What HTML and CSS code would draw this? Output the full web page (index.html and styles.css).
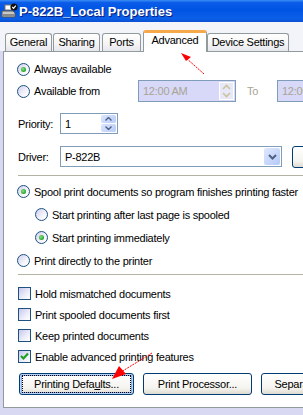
FILE: index.html
```html
<!DOCTYPE html>
<html lang="en">
<head>
    <meta charset="UTF-8">
    <title>P-822B_Local Properties</title>
    <link rel="stylesheet" href="styles.css">
</head>
<body>
    <div class="window">
        <div class="titlebar">
            <svg class="app-icon" width="17" height="17" viewBox="0 0 17 17">
                <rect x="4" y="2" width="7" height="5" fill="#fff" stroke="#777"/>
                <path d="M1 8 L12 8 L14 10 L14 14 L1 14 Z" fill="#c8c8c8" stroke="#555"/>
                <rect x="2" y="11" width="11" height="2" fill="#8a8a8a"/>
                <circle cx="13" cy="4" r="3.6" fill="#111"/>
                <path d="M11.3 4 L12.6 5.4 L14.8 2.6" stroke="#fff" stroke-width="1.2" fill="none"/>
            </svg>
            <span class="title">P-822B_Local Properties</span>
        </div>

        <div class="tabstrip">
            <div class="tab tab-general">General</div>
            <div class="tab tab-sharing">Sharing</div>
            <div class="tab tab-ports">Ports</div>
            <div class="tab tab-advanced active">Advanced</div>
            <div class="tab tab-device">Device Settings</div>
        </div>

        <div class="panel">
            <div class="row row-always">
                <span class="radio checked"></span>
                <span class="label">Always available</span>
            </div>
            <div class="row row-from">
                <div class="from-label">
                    <span class="radio"></span>
                    <span class="label">Available from</span>
                </div>
                <div class="timebox">
                    <span>12:00 AM</span>
                    <span class="time-spin">
                        <svg width="9" height="14" viewBox="0 0 9 14">
                            <path d="M1 5 L4.5 1.5 L8 5" stroke="#c8c4a0" stroke-width="1.6" fill="none"/>
                            <path d="M1 9 L4.5 12.5 L8 9" stroke="#c8c4a0" stroke-width="1.6" fill="none"/>
                        </svg>
                    </span>
                </div>
                <span class="to-label">To</span>
                <div class="timebox">
                    <span>12:00 AM</span>
                </div>
            </div>
            <div class="row row-priority">
                <span class="field-label">Priority:</span>
                <div class="spinbox">
                    <span class="spin-value">1</span>
                    <span class="spin-buttons">
                        <span class="spin-btn">
                            <svg width="7" height="4" viewBox="0 0 7 4"><path d="M0.5 3.5 L3.5 0.5 L6.5 3.5" stroke="#4d6185" stroke-width="1.4" fill="none"/></svg>
                        </span>
                        <span class="spin-btn">
                            <svg width="7" height="4" viewBox="0 0 7 4"><path d="M0.5 0.5 L3.5 3.5 L6.5 0.5" stroke="#4d6185" stroke-width="1.4" fill="none"/></svg>
                        </span>
                    </span>
                </div>
            </div>
            <div class="row row-driver">
                <span class="field-label">Driver:</span>
                <div class="combo">
                    <span class="combo-value">P-822B</span>
                    <span class="combo-btn">
                        <svg width="9" height="6" viewBox="0 0 9 6"><path d="M1 1 L4.5 4.5 L8 1" stroke="#4d6185" stroke-width="2" fill="none"/></svg>
                    </span>
                </div>
                <div class="button new-driver">New Driver...</div>
            </div>

            <div class="separator sep-one"></div>

            <div class="spool-group">
                <div class="row opt">
                    <span class="radio checked"></span>
                    <span class="label">Spool print documents so program finishes printing faster</span>
                </div>
                <div class="row opt sub">
                    <span class="radio"></span>
                    <span class="label">Start printing after last page is spooled</span>
                </div>
                <div class="row opt sub">
                    <span class="radio checked"></span>
                    <span class="label">Start printing immediately</span>
                </div>
                <div class="row opt">
                    <span class="radio"></span>
                    <span class="label">Print directly to the printer</span>
                </div>
            </div>

            <div class="separator sep-two"></div>

            <div class="check-group">
                <div class="row check-row">
                    <span class="checkbox"></span>
                    <span class="label">Hold mismatched documents</span>
                </div>
                <div class="row check-row">
                    <span class="checkbox"></span>
                    <span class="label">Print spooled documents first</span>
                </div>
                <div class="row check-row">
                    <span class="checkbox"></span>
                    <span class="label">Keep printed documents</span>
                </div>
                <div class="row check-row">
                    <span class="checkbox checked">
                        <svg width="11" height="11" viewBox="0 0 11 11"><path d="M2 5 L4.5 7.5 L9 2.5" stroke="#21a121" stroke-width="2.2" fill="none"/></svg>
                    </span>
                    <span class="label">Enable advanced printing features</span>
                </div>
            </div>

            <div class="button-row">
                <div class="button focused btn-defaults"><span class="focus-rect">Printing Defa<u>u</u>lts...</span></div>
                <div class="button btn-processor">Print Processor...</div>
                <div class="button btn-separator">Separator Page...</div>
            </div>
        </div>

        <svg class="annotations" width="303" height="415" viewBox="0 0 303 415">
            <line x1="204" y1="74" x2="186" y2="58" stroke="#f00" stroke-width="1" stroke-dasharray="2 1"/>
            <path d="M181 53 L191 57 L186 61 Z" fill="#f00"/>
            <line x1="152" y1="353" x2="121" y2="372" stroke="#f00" stroke-width="1" stroke-dasharray="2 1"/>
            <path d="M112 379 L119 366 L126 374 Z" fill="#f00"/>
        </svg>
    </div>
</body>
</html>
```

FILE: styles.css
```css
body {
    margin: 0;
    background-color: #d9d8f2;
    font-family: 'Liberation Sans', Arial, sans-serif;
    font-size: 11px;
    letter-spacing: -0.25px;
    color: #000;
    overflow: hidden;
}

.window {
    position: relative;
    width: 303px;
    height: 415px;
    overflow: hidden;
    background-color: #d9d8f2;
}

/* title bar */
.titlebar {
    height: 22px;
    display: flex;
    align-items: center;
    background: linear-gradient(#3d8cf5 0%, #0a5ce8 12%, #0054e3 45%, #0b5fe9 85%, #0a4fd0 100%);
    color: #fff;
}

.app-icon {
    margin-left: 1px;
    flex-shrink: 0;
}

.title {
    margin-left: 1px;
    font-weight: bold;
    font-size: 13px;
    letter-spacing: 0;
    text-shadow: 1px 1px 0 #0a1e80;
    white-space: nowrap;
}

/* tabs */
.tabstrip {
    height: 29px;
    display: flex;
    align-items: flex-end;
    background-color: #f3f3fa;
    padding-left: 5px;
}

.tab {
    box-sizing: border-box;
    flex-shrink: 0;
    height: 18px;
    border: 1px solid #919b9c;
    border-bottom: none;
    border-radius: 3px 3px 0 0;
    background: linear-gradient(#ffffff, #f4f4f4 60%, #e6e6ee);
    text-align: center;
    line-height: 17px;
    white-space: nowrap;
}

.tab-general { width: 47px; }
.tab-sharing { width: 47px; margin-left: 1px; }
.tab-ports { width: 39px; margin-left: 2px; }
.tab-advanced { width: 64px; margin-left: 2px; }
.tab-device { width: 82px; }

.tab.active {
    position: relative;
    z-index: 2;
    height: 22px;
    margin-bottom: -1px;
    background: #fff;
    border-top: 3px solid #f6a94a;
    line-height: 15px;
}

/* panel */
.panel {
    box-sizing: border-box;
    margin-left: 3px;
    width: 330px;
    height: 357px;
    border: 1px solid #919b9c;
    background: #fff;
    padding-top: 7px;
}

.row {
    display: flex;
    align-items: center;
    white-space: nowrap;
}

.row > * {
    flex-shrink: 0;
}

.label {
    margin-left: 4px;
}

.row-always {
    height: 20px;
    padding-left: 13px;
}

.row-from {
    height: 22px;
    margin-top: 1px;
}

.from-label {
    display: flex;
    align-items: center;
    width: 121px;
    padding-left: 13px;
}

.timebox {
    box-sizing: border-box;
    width: 98px;
    height: 22px;
    border: 1px solid #7f9db9;
    background: #d8d8f8;
    color: #a8a494;
    display: flex;
    align-items: center;
    justify-content: space-between;
    padding-left: 4px;
    overflow: hidden;
}

.time-spin {
    width: 15px;
    height: 18px;
    margin-right: 1px;
    border: 1px solid #fff;
    box-sizing: border-box;
    display: flex;
    align-items: center;
    justify-content: center;
    background: #e8e8f8;
}

.to-label {
    width: 30px;
    margin-left: 11px;
    color: #a8a494;
}

.row-priority {
    height: 21px;
    margin-top: 11px;
}

.field-label {
    width: 42px;
    margin-left: 14px;
}

.spinbox {
    box-sizing: border-box;
    width: 58px;
    height: 21px;
    border: 1px solid #7f9db9;
    display: flex;
    align-items: center;
    justify-content: space-between;
}

.spin-value {
    margin-left: 4px;
}

.spin-buttons {
    display: flex;
    flex-direction: column;
    gap: 1px;
    margin-right: 1px;
}

.spin-btn {
    width: 15px;
    height: 8px;
    border-radius: 2px;
    background: linear-gradient(135deg, #dbe6fd, #b8cbf8);
    display: flex;
    align-items: center;
    justify-content: center;
}

.row-driver {
    height: 21px;
    margin-top: 12px;
}

.combo {
    box-sizing: border-box;
    width: 222px;
    height: 21px;
    border: 1px solid #7f9db9;
    display: flex;
    align-items: center;
    justify-content: space-between;
}

.combo-value {
    margin-left: 4px;
}

.combo-btn {
    width: 16px;
    height: 17px;
    margin-right: 1px;
    border-radius: 2px;
    background: linear-gradient(135deg, #dfe8fd, #b5c8f7);
    display: flex;
    align-items: center;
    justify-content: center;
}

.button {
    box-sizing: border-box;
    flex-shrink: 0;
    height: 22px;
    border: 1px solid #003c74;
    border-radius: 3px;
    background: linear-gradient(#ffffff, #f5f4ef 70%, #dedbd0);
    display: flex;
    align-items: center;
    justify-content: center;
    white-space: nowrap;
    overflow: hidden;
}

.new-driver {
    width: 100px;
    margin-left: 10px;
}

.separator {
    height: 1px;
    margin-left: 14px;
    background: #b4b1a5;
}

.sep-one {
    margin-top: 8px;
}

.spool-group {
    margin-top: 4px;
}

.opt {
    height: 23px;
    padding-left: 13px;
}

.opt.sub {
    padding-left: 31px;
}

.sep-two {
    margin-top: 2px;
}

.check-group {
    margin-top: 8px;
}

.check-row {
    height: 21px;
    padding-left: 14px;
}

/* form controls */
.radio {
    position: relative;
    width: 13px;
    height: 13px;
    box-sizing: border-box;
    border: 1px solid #1c5180;
    border-radius: 50%;
    background: linear-gradient(135deg, #cfcfee, #f4f4fc 60%, #fff);
    flex-shrink: 0;
}

.radio.checked::after {
    content: "";
    position: absolute;
    left: 3px;
    top: 3px;
    width: 5px;
    height: 5px;
    border-radius: 50%;
    background: radial-gradient(circle at 40% 40%, #8be28b, #21a121 70%);
}

.checkbox {
    width: 13px;
    height: 13px;
    box-sizing: border-box;
    border: 1px solid #1c5180;
    background: linear-gradient(135deg, #c6c6ec, #eeeefb 60%, #fff);
    display: flex;
    align-items: center;
    justify-content: center;
    flex-shrink: 0;
}

/* bottom buttons */
.button-row {
    display: flex;
    gap: 9px;
    margin-top: 6px;
    margin-left: 15px;
}

.btn-defaults { width: 115px; }
.btn-processor { width: 109px; }
.btn-separator { width: 109px; }

.button.focused {
    box-shadow: inset 0 0 0 1px #bcd4f6, inset 0 0 0 2px #89adec;
}

.focus-rect {
    display: flex;
    align-items: center;
    justify-content: center;
    width: 107px;
    height: 16px;
    outline: 1px dotted #000;
}

.annotations {
    position: absolute;
    left: 0;
    top: 0;
    pointer-events: none;
}
```
